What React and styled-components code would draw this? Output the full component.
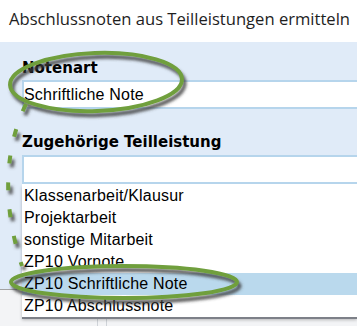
import React from "react"
import styled, { createGlobalStyle } from "styled-components"

const GlobalStyle = createGlobalStyle`
  html, body {
    margin: 0;
    padding: 0;
    background: #ffffff;
  }
`

const Page = styled.div`
  position: relative;
  width: 357px;
  height: 326px;
  overflow: hidden;
  background: #ffffff;
`

const Header = styled.div`
  height: 42px;
  box-sizing: border-box;
  padding: 7px 0 0 9px;
  font-family: "Open Sans", sans-serif;
  font-size: 16.6px;
  line-height: 24px;
  color: #1e1e1e;
  white-space: nowrap;
`

const Panel = styled.div`
  background: #e0ebf8;
  height: 247px;
  box-sizing: border-box;
  padding: 17px 0 0 22px;
`

const Label = styled.div`
  font-family: "DejaVu Sans", Verdana, sans-serif;
  font-weight: bold;
  font-size: 15px;
  line-height: 18px;
  color: #000;
  margin-top: ${({ gap }) => gap || 0}px;
  margin-bottom: ${({ below }) => below || 3}px;
`

const Field = styled.div`
  height: 29px;
  box-sizing: border-box;
  border: 2px solid #b6d5ec;
  border-right: none;
  background: #ffffff;
  font-family: "Liberation Sans", Arial, sans-serif;
  font-size: 16px;
  letter-spacing: 0.2px;
  line-height: 25px;
  color: #000;
  white-space: nowrap;
`

const Combo = styled.div`
  position: relative;
`

const List = styled.ul`
  position: absolute;
  top: 100%;
  left: 0;
  right: 0;
  margin: 0;
  padding: 1px 0 0;
  list-style: none;
  background: #ffffff;
  box-shadow: 0 2px 0 #7d8088, 0 3px 3px rgba(0, 0, 0, 0.25);
  z-index: 2;
`

const Item = styled.li`
  height: 22px;
  padding-left: 2px;
  font-family: "Liberation Sans", Arial, sans-serif;
  font-size: 16px;
  letter-spacing: 0.2px;
  line-height: 22px;
  color: #000;
  white-space: nowrap;
  background: ${({ selected }) => (selected ? "#bad9ed" : "transparent")};
`

const Below = styled.div`
  display: flex;
  height: 37px;
  border-top: 1px solid #a3a3a3;
  background: #f3f4f6;
`

const Cell = styled.div`
  width: ${({ w }) => w}px;
  flex: none;
  border-right: 1px solid #cfd3d8;
`

const Overlay = styled.svg`
  position: absolute;
  top: 0;
  left: 0;
  pointer-events: none;
  z-index: 5;
`

const items = [
  "Klassenarbeit/Klausur",
  "Projektarbeit",
  "sonstige Mitarbeit",
  "ZP10 Vornote",
  "ZP10 Schriftliche Note",
  "ZP10 Abschlussnote",
]

function Annotations() {
  return (
    <Overlay width="357" height="326" viewBox="0 0 357 326">
      <defs>
        <filter id="shade" x="-20%" y="-20%" width="140%" height="160%">
          <feDropShadow dx="2.5" dy="4" stdDeviation="1.5" floodColor="#3c3c3c" floodOpacity="0.85" />
        </filter>
      </defs>
      <g fill="none" stroke="#6f9f3c" strokeWidth="4" filter="url(#shade)">
        <ellipse cx="96" cy="82" rx="86" ry="29" transform="rotate(-2 96 82)" />
        <ellipse cx="124" cy="282" rx="113" ry="16" />
        <path
          d="M 26 104 C 4 150, 2 205, 22 266"
          strokeWidth="4"
          strokeDasharray="8 19"
        />
      </g>
    </Overlay>
  )
}

export default function App() {
  return (
    <Page>
      <GlobalStyle />
      <Header>Abschlussnoten aus Teilleistungen ermitteln</Header>
      <Panel>
        <Label>Notenart</Label>
        <Field>Schriftliche Note</Field>
        <Label gap={24} below={4}>
          Zugehörige Teilleistung
        </Label>
        <Combo>
          <Field />
          <List>
            {items.map((text) => (
              <Item key={text} selected={text === "ZP10 Schriftliche Note"}>
                {text}
              </Item>
            ))}
          </List>
        </Combo>
      </Panel>
      <Below>
        <Cell w={97} />
        <Cell w={8} />
      </Below>
      <Annotations />
    </Page>
  )
}
